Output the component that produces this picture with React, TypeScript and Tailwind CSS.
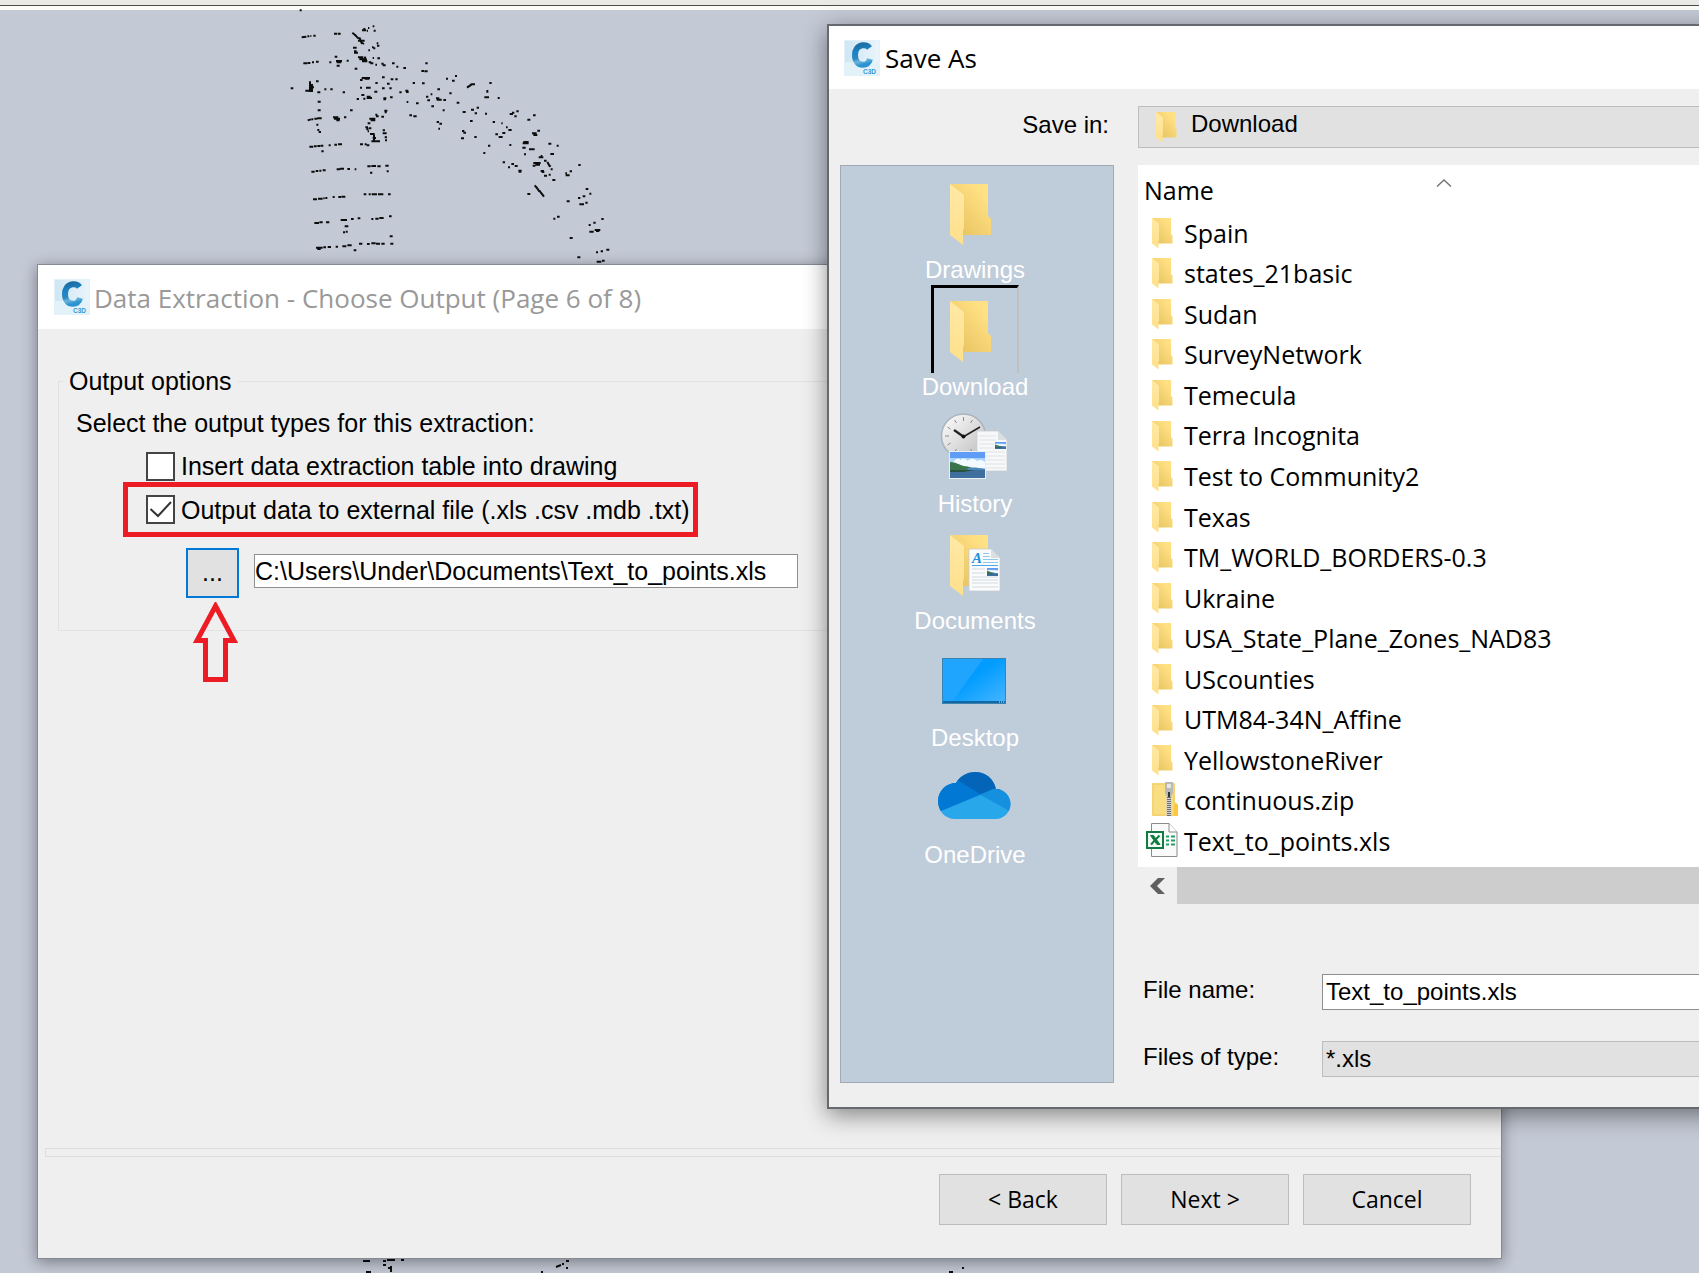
import { useState } from "react";
import type { ReactNode } from "react";

const folders: string[] = [
  "Spain",
  "states_21basic",
  "Sudan",
  "SurveyNetwork",
  "Temecula",
  "Terra Incognita",
  "Test to Community2",
  "Texas",
  "TM_WORLD_BORDERS-0.3",
  "Ukraine",
  "USA_State_Plane_Zones_NAD83",
  "UScounties",
  "UTM84-34N_Affine",
  "YellowstoneRiver",
];

// survey points of the drawing, in thirds of a pixel
const pointsPath =
  "M89 31h6 M95 112l14 -2 M112 109h6 M121 108h3 M130 107h7 M192 101h9 M203 101h9 " +
  "M247 98l12 10 M256 106l10 10 M268 112l8 20 M264 122h20 M272 126l10 6 M276 91h12 M280 87h6 M290 92h4 M294 84h4 M308 79h5 M311 92h6 " +
  "M249 143h11 M252 154h8 M252 158h12 M264 172h16 M268 178h22 M276 184h16 M284 170l6 14 M296 187h8 M301 190h9 M316 194h5 M308 174h4 M320 130h5 M321 137h7 M310 145h6 M306 142h5 M295 151h5 M322 175h8 M334 191h7 M338 196h9 " +
  "M100 190h12 M113 189h8 M126 187h6 M138 185h8 M178 187h6 M194 170h8 M198 183h18 M200 187h14 M200 197h9 M230 182h6 M254 206h8 " +
  "M62 265h8 M120 244v32 M126 252v24 M118 262h14 M106 272h22 M138 244h8 M142 277h9 M163 268h6 M181 268h7 M218 277h7 M143 305h9 M143 331h9 M240 331h8 " +
  "M113 361l10 -3 M124 358h6 M133 356h9 M142 355h13 M139 374h6 M142 390h6 M146 396h7 M189 352h16 M192 356h18 M199 361h10 M222 352h7 " +
  "M118 440h12 M132 439h8 M142 438h9 M152 437h8 M154 454h7 M176 436h6 M193 434h8 M204 433h12 M270 433h9 M284 433h6 M290 436h8 " +
  "M124 515h10 M137 513h8 M148 512h6 M158 511h9 M200 508h10 M210 506h12 M232 507h8 M254 508h5 M292 499h10 M304 498h14 M322 499h10 M346 497h10 M300 518h7 M350 514h6 " +
  "M129 598h12 M144 596h14 M160 595h4 M166 594h6 M188 591h6 M205 591h8 M214 590h12 M281 583h8 M296 583h6 M305 583h16 M324 583h16 M354 583h8 " +
  "M133 669h14 M148 667h10 M168 667h10 M212 660h19 M243 657h8 M263 655h8 M304 657h6 M316 656h10 M328 654h13 M357 649h8 M224 679h11 M219 697h6 M227 695h6 M359 709h9 " +
  "M138 743h20 M142 747h10 M160 742h8 M173 741h10 M197 740h7 M217 739h12 M232 736h13 M251 751h8 M267 731h10 M291 732h8 M304 730h13 M318 731h12 M334 731h10 M361 731h9 " +
  "M270 240h8 M275 234h25 M284 236h14 M336 232h8 M362 238h8 M376 238h7 M316 249h7 M351 251h8 M270 263h6 M288 263h14 M336 265h8 M358 265h7 M313 275h9 M274 285h9 M290 290h12 M290 294h16 M260 297h7 M280 296h6 M340 295h9 M340 298h8 M360 292h8 " +
  "M343 332h9 M344 337h6 M316 344h6 M318 349h8 M334 350h8 M298 356h18 M302 361h14 M293 370h8 M286 382h8 M289 388h6 M296 385h8 M293 394h4 M300 402h14 M312 404v22 M304 424h26 M338 391h7 M338 400h12 M344 412h7 M345 421h6 M308 414h10 " +
  "M366 190h8 M379 200h6 M400 204h8 M466 190h7 M454 213h8 M463 214h10 M428 249h7 M456 250h8 M388 277h7 M406 272h9 M408 276h8 M410 306h5 M438 310h8 M418 346h8 M430 349h10 " +
  "M502 268h8 M538 280h7 M468 290h7 M482 283h5 M472 301h8 M498 295h10 M500 299h15 M520 300h8 M484 319h8 M518 331h6 M560 308h8 M500 366h7 M508 371h8 M505 386h5 M528 236h6 M555 228h6 M546 242h8 M591 263l14 -10 M594 260l8 -4 M602 253h13 M658 249h7 M652 270v8 M643 292h14 M683 294h6 " +
  "M578 336h9 M603 329h9 M620 323h7 M614 340h7 M645 341h6 M600 363h8 M668 366h7 M694 370h4 M708 382h5 M715 390h10 M697 399h9 M676 403h8 M686 411h12 M576 393h7 M580 398h8 M573 415h9 M613 411h7 M654 437h7 M640 459h6 M718 435h6 " +
  "M719 342h10 M726 338h7 M739 334h7 M733 349h7 M772 359h9 M789 346h8 M802 392h8 M786 400h14 M790 405h12 M760 426h16 M758 430h18 M757 443h10 M777 448h7 M784 448h10 M762 463h6 M835 431h9 M860 437h6 M841 462h11 " +
  "M698 487h7 M724 492h8 M734 498h9 M714 502h6 M745 512h10 M746 515h8 M806 472h14 M812 468h5 M790 489h22 M796 494h14 M788 497h8 M822 482h8 M832 486l8 14 M836 494l6 6 M842 508h6 M812 513h10 M815 516h8 M822 527h9 M836 524h6 M847 540h9 " +
  "M794 556l10 12 M798 560l10 14 M808 572l14 18 M772 582h9 M886 520h5 M899 514h7 M887 526h12 M925 495h7 M947 567h8 M958 581h6 M924 594h7 M938 589h8 M928 613h14 M946 608h7 M890 604h9 M850 656h6 M861 650h8 M994 657h7 M970 668h7 M956 675h6 M958 695h13 M974 690h17 M978 693h10 M899 714h9 M978 757h6 M992 754h7 M1009 749h9 M922 772h9 M980 785h14 M996 782h8";

function DrawingPoints() {
  return (
    <>
      <svg
        className="absolute left-[270px] top-0 h-[265px] w-[360px]"
        viewBox="0 0 1080 795"
        fill="none"
        stroke="#0c0c0c"
        strokeWidth="6"
        aria-hidden="true"
      >
        <path d={pointsPath} />
      </svg>
      <svg
        className="absolute bottom-0 left-[320px] h-[17px] w-[660px]"
        viewBox="320 1256 660 17"
        fill="none"
        stroke="#0c0c0c"
        strokeWidth="2"
        aria-hidden="true"
      >
        <path d="M329 1258h6M363 1261h7M383 1261h3M387 1260h8M401 1260h3M383 1265h3M388 1268h4M391 1266v6M366 1272h5M556 1267l5 -2M562 1264h2M566 1261h3M566 1268h2M541 1272h2M949 1272h4M962 1268h2" />
      </svg>
    </>
  );
}

function AppIcon() {
  return (
    <svg className="h-9 w-9 shrink-0" viewBox="0 0 36 36" aria-hidden="true">
      <defs>
        <linearGradient id="c-ring" x1="0.300" y1="0" x2="0.500" y2="1">
          <stop offset="0" stopColor="#1d6fa5" />
          <stop offset="0.300" stopColor="#1c84c6" />
          <stop offset="0.600" stopColor="#2a86bd" />
          <stop offset="0.800" stopColor="#6cb5dc" />
          <stop offset="1" stopColor="#2b93d0" />
        </linearGradient>
        <linearGradient id="c-tile" x1="0" y1="0" x2="1" y2="0">
          <stop offset="0" stopColor="#cfe6f4" />
          <stop offset="1" stopColor="#eaf4fb" />
        </linearGradient>
      </defs>
      <rect width="36" height="36" fill="#e3f1f9" />
      <rect x="1" y="1" width="34" height="21" fill="url(#c-tile)" />
      <path
        d="M25.500 8C24 5.800 21.500 5 18.500 5.300C13.500 5.900 11 10 11 15C11 20.800 14 24.800 19 24.800C22.500 24.800 25 22.500 26 19"
        fill="none"
        stroke="url(#c-ring)"
        strokeWidth="6"
      />
      <text
        x="19"
        y="34"
        fontSize="6.500"
        fontWeight="700"
        fill="#2f9ad2"
        fontFamily="Liberation Sans, sans-serif"
      >
        C3D
      </text>
    </svg>
  );
}

function FolderShape() {
  return (
    <>
      <defs>
        <linearGradient id="folder-back" x1="0" y1="1" x2="1" y2="0">
          <stop offset="0.2" stopColor="#ebc765" />
          <stop offset="0.8" stopColor="#ffe083" />
        </linearGradient>
        <linearGradient id="folder-flap" x1="0" y1="0" x2="0" y2="1">
          <stop offset="0" stopColor="#ffe9a6" />
          <stop offset="1" stopColor="#fee08a" />
        </linearGradient>
      </defs>
      <path d="M19 16H57V48L60 51V67H30V30Z" fill="url(#folder-back)" />
      <path d="M19 16L33 27V60L32 62V77L19 67Z" fill="url(#folder-flap)" />
    </>
  );
}

function SmallFolder() {
  return (
    <svg className="h-[31px] w-[21px] shrink-0" viewBox="19 16 42 62" aria-hidden="true">
      <FolderShape />
    </svg>
  );
}

function ZipIcon() {
  return (
    <svg className="h-[38px] w-8" viewBox="0 0 32 38" aria-hidden="true">
      <path d="M6 1H29V20L32 23V34H6Z" fill="#f9dd83" />
      <path d="M7 2H28V33H7Z" fill="none" stroke="#f0cc62" />
      <path d="M28 34V23L30 21L32 23V34Z" fill="#fbc93b" />
      <path d="M19 0H27V11L25 15H21L19 11Z" fill="#b9b9b9" />
      <path d="M21 2H25V6H21Z" fill="#e6e6e6" />
      <path d="M22 10H24V15H22Z" fill="#333" />
      <path d="M23 15V34" stroke="#cfcfcf" strokeWidth="5" />
      <path d="M23 15V34" stroke="#6f6f6f" strokeWidth="4" strokeDasharray="1 1" />
    </svg>
  );
}

function ExcelIcon() {
  return (
    <svg className="h-[40px] w-8" viewBox="0 0 32 40" aria-hidden="true">
      <path d="M5.500 1.500H23L31 10V34.500H5.500Z" fill="#fafafa" stroke="#8b8b8b" />
      <path d="M23 1.500V10H31" fill="#fff" stroke="#8b8b8b" />
      <path
        d="M20 14.500H23M25 14.500H29M20 18.500H23M25 18.500H29M20 22.500H23M25 22.500H29"
        stroke="#21a366"
        strokeWidth="2"
      />
      <rect x="1" y="10" width="16" height="16" fill="#f4faf6" stroke="#107c41" strokeWidth="2" />
      <path d="M4.500 13.500H7.500L14 22.500H11Z" fill="#107c41" stroke="#107c41" />
      <path d="M13.500 13.500L5 22.500" stroke="#107c41" strokeWidth="2" />
    </svg>
  );
}

function Landscape({ x, y, width, height }: { x: number; y: number; width: number; height: number }) {
  return (
    <svg x={x} y={y} width={width} height={height} viewBox="0 0 36 26" preserveAspectRatio="none">
      <rect width="36" height="26" fill="#5f9cf5" />
      <rect y="6" width="36" height="12" fill="#a9d3f8" />
      <path d="M3 11C5 6 9 6 11 8C14 5 17 7 18 9C22 5 26 7 28 9C31 7 34 8 36 10V16H3Z" fill="#f2f9ff" />
      <path d="M0 10C6 10 10 13 14 14C20 14 24 17 29 18H0Z" fill="#39744c" />
      <path d="M18 16C24 15 30 16 36 17V19H18Z" fill="#4a86b8" />
      <rect y="18" width="36" height="8" fill="#3f6f9f" />
      <path d="M0 18H26L14 20H0Z" fill="#27523f" />
    </svg>
  );
}

function HistoryShape() {
  return (
    <>
      <defs>
        <linearGradient id="clock-face" x1="0" y1="0" x2="1" y2="1">
          <stop offset="0" stopColor="#fff" />
          <stop offset="1" stopColor="#bdbdbd" />
        </linearGradient>
      </defs>
      <circle cx="32.500" cy="34" r="22" fill="url(#clock-face)" stroke="#a9b4bd" strokeWidth="1.500" />
      <path
        d="M32.500 15v4M41.500 18l-2 3M23.500 18l2 3M16.500 25l3 2M14 34h4M16.500 43l3 -2M23.500 50l2 -3M41.500 50l-2 -3"
        stroke="#8b8b8b"
      />
      <path d="M23 28L33 35" stroke="#222" strokeWidth="2.200" />
      <path d="M32 35L49 25" stroke="#222" strokeWidth="1.500" />
      <circle cx="32.500" cy="34.500" r="2" fill="#111" />
      <path d="M46 29H67L76 38V69H46Z" fill="#f7f8f9" stroke="#c9cdd1" strokeWidth="0.800" />
      <path d="M67 29V38H76Z" fill="#dcdfe2" />
      <path
        d="M48 34H65M48 38H65M48 42H63M48 46H63M48 50H74M48 54H74M48 58H74M48 62H74M48 66H74"
        stroke="#dfe2e5"
      />
      <Landscape x={64} y={40} width={11} height={7} />
      <rect x="18" y="49" width="37" height="28" fill="#e9eef2" />
      <Landscape x={19} y={50} width={35} height={26} />
    </>
  );
}

function DocumentsShape() {
  return (
    <>
      <FolderShape />
      <path d="M38 30H60L69 39V72H38Z" fill="#fafbfc" stroke="#c9cdd1" strokeWidth="0.800" />
      <path d="M60 30V39H69Z" fill="#dcdfe2" />
      <text
        x="41"
        y="44"
        fontSize="15"
        fontStyle="italic"
        fontWeight="700"
        fill="#1e93dc"
        fontFamily="Liberation Serif, serif"
      >
        A
      </text>
      <path d="M52 34.500H58M52 37.500H59M52 40.500H67M52 43.500H67" stroke="#8dc8ee" />
      <path d="M41 46.500H67" stroke="#4ba8e2" />
      <path d="M41 50H54M41 54H54M41 58H67M41 61H67M41 64H67M41 68H67" stroke="#d5d9dd" />
      <Landscape x={56} y={49} width={11} height={8} />
    </>
  );
}

function DesktopShape() {
  return (
    <>
      <defs>
        <linearGradient id="desktop-glow" x1="0.2" y1="0.200" x2="1" y2="1">
          <stop offset="0.3" stopColor="#009cff" />
          <stop offset="1" stopColor="#45b5ff" />
        </linearGradient>
      </defs>
      <rect x="11" y="22" width="64" height="46" fill="#3b83b4" />
      <rect x="12" y="23" width="62" height="43" fill="url(#desktop-glow)" />
      <path d="M12 23H52L21 66H12Z" fill="#20a5ff" />
      <rect x="12" y="65" width="62" height="2" fill="#13689f" />
      <path d="M68 66H69M70 66H71M72 66H73" stroke="#cfe8f8" />
    </>
  );
}

function OneDriveShape() {
  return (
    <>
      <defs>
        <clipPath id="cloud">
          <path d="M24 66C14 66 7 58 7 48C7 38 15 30 25 30C29 23 36 19 44 19C55 19 63 26 65 36C73 36 79.500 43 79.500 51C79.500 59 73 66 65 66Z" />
        </clipPath>
      </defs>
      <g clipPath="url(#cloud)">
        <rect x="7" y="19" width="73" height="48" fill="#28a8ea" />
        <path d="M20 30V15H70V38L50 42Z" fill="#0364b8" />
        <path d="M5 60V28H28L50 41.500Z" fill="#0078d4" />
        <path d="M49 41.500L62 36L82 34V60Z" fill="#1490df" />
      </g>
    </>
  );
}

type Place = {
  name: string;
  icon: ReactNode;
};

const places: Place[] = [
  { name: "Drawings", icon: <FolderShape /> },
  { name: "Download", icon: <FolderShape /> },
  { name: "History", icon: <HistoryShape /> },
  { name: "Documents", icon: <DocumentsShape /> },
  { name: "Desktop", icon: <DesktopShape /> },
  { name: "OneDrive", icon: <OneDriveShape /> },
];

function CheckOption({
  label,
  checked,
  onChange,
}: {
  label: string;
  checked: boolean;
  onChange: (value: boolean) => void;
}) {
  return (
    <label className="flex items-center gap-[6px] leading-8 whitespace-nowrap">
      <span className="grid shrink-0">
        <input
          type="checkbox"
          checked={checked}
          onChange={(e) => onChange(e.target.checked)}
          className="col-start-1 row-start-1 h-[29px] w-[29px] appearance-none border-2 border-[#444] bg-white"
        />
        {checked && (
          <svg
            className="pointer-events-none col-start-1 row-start-1 h-[29px] w-[29px]"
            viewBox="0 0 29 29"
            fill="none"
            stroke="#333"
            strokeWidth="2"
            aria-hidden="true"
          >
            <path d="M4.500 14L12 21L25 7" />
          </svg>
        )}
      </span>
      {label}
    </label>
  );
}

function DataExtractionWindow() {
  const [insertTable, setInsertTable] = useState(false);
  const [externalFile, setExternalFile] = useState(true);

  return (
    <section className="absolute bottom-[14px] left-[37px] right-[197px] top-[264px] flex flex-col border border-[#858b93] bg-[#efefef] shadow-[0_3px_14px_rgba(0,0,0,0.4)]">
      <header className="flex h-16 items-center gap-1 bg-white pl-4">
        <AppIcon />
        <h1 className="pt-[2px] font-['Open_Sans',sans-serif] text-[26px] text-[#999]">
          Data Extraction - Choose Output (Page 6 of 8)
        </h1>
      </header>

      <fieldset className="ml-5 mt-9 border border-[#e2e2e2] pb-8 text-[25px]">
        <legend className="ml-1 px-[6px] leading-8">Output options</legend>
        <p className="ml-[17px] mt-[10px] leading-8">
          Select the output types for this extraction:
        </p>
        <div className="ml-[87px] mt-[11px]">
          <CheckOption
            label="Insert data extraction table into drawing"
            checked={insertTable}
            onChange={setInsertTable}
          />
        </div>
        <div className="ml-16 flex h-[55px] w-[575px] items-center border-[5px] border-[#ed1c24] pl-[18px]">
          <CheckOption
            label="Output data to external file (.xls .csv .mdb .txt)"
            checked={externalFile}
            onChange={setExternalFile}
          />
        </div>
        <div className="ml-[127px] mt-[11px] flex items-center gap-[15px]">
          <div className="relative">
            <button
              type="button"
              aria-label="Browse"
              className="h-[50px] w-[53px] border-2 border-[#0078d7] bg-[#e1e1e1]"
            >
              ...
            </button>
            <svg
              className="absolute left-[7px] top-[54px] h-20 w-[45px]"
              viewBox="0 0 45 80"
              fill="none"
              stroke="#ed1c24"
              strokeWidth="5"
              aria-hidden="true"
            >
              <path d="M22.500 4L41 38.500H32.500V77.500H12.500V38.500H4Z" />
            </svg>
          </div>
          <input
            type="text"
            aria-label="Output path"
            defaultValue="C:\Users\Under\Documents\Text_to_points.xls"
            className="mb-1 h-[34px] w-[544px] border border-[#8f8f8f] bg-white"
          />
        </div>
      </fieldset>

      <div className="ml-[7px] mt-auto h-[9px] border-y border-l border-[#dedede]"></div>
      <footer className="flex justify-end gap-[14px] pb-[33px] pr-[30px] pt-[17px] font-['Open_Sans',sans-serif] text-[23px]">
        {["< Back", "Next >", "Cancel"].map((name) => (
          <button
            key={name}
            type="button"
            className="h-[51px] w-[168px] border border-[#bdbdbd] bg-[#e1e1e1]"
          >
            {name}
          </button>
        ))}
      </footer>
    </section>
  );
}

function FileRow({ icon, name }: { icon: ReactNode; name: string }) {
  return (
    <li className="flex flex-1 items-center gap-[6px] pl-2">
      <span className="flex w-8 shrink-0 justify-center">{icon}</span>
      <span className="whitespace-nowrap">{name}</span>
    </li>
  );
}

function SaveAsDialog() {
  const [place, setPlace] = useState("Download");

  return (
    <section className="absolute -right-6 left-[827px] top-6 flex flex-col border-2 border-[#66696d] bg-[#efefef] shadow-[0_6px_22px_rgba(0,0,0,0.45)]">
      <header className="flex h-[63px] items-center gap-[5px] bg-white pl-[15px] font-['Open_Sans',sans-serif] text-[26px]">
        <AppIcon />
        <h2 className="pt-[2px]">Save As</h2>
      </header>

      <div className="flex items-center pl-[11px] pt-[17px]">
        <label htmlFor="save-in" className="w-[298px] shrink-0 pb-1 pr-[29px] text-right">
          Save in:
        </label>
        <div className="relative flex-1">
          <select
            id="save-in"
            className="h-[42px] w-full appearance-none border border-r-0 border-[#bdbdbd] bg-[#e1e1e1] pb-[6px] pl-[52px]"
          >
            <option>Download</option>
          </select>
          <span className="pointer-events-none absolute left-[18px] top-[6px]">
            <SmallFolder />
          </span>
        </div>
      </div>

      <div className="flex gap-6 pb-6 pl-[11px] pt-[17px]">
        <nav className="flex w-[274px] shrink-0 flex-col items-center border border-[#a3a9b5] bg-[#bfccda] pr-1 pt-[2px] text-white">
          {places.map((item) => (
            <button
              key={item.name}
              type="button"
              onClick={() => setPlace(item.name)}
              className="flex h-[117px] flex-col items-center"
            >
              <span className="grid">
                <svg
                  className="col-start-1 row-start-1 h-[88px] w-[88px]"
                  viewBox="0 0 88 88"
                  aria-hidden="true"
                >
                  {item.icon}
                </svg>
                {item.name === place && (
                  <span className="col-start-1 row-start-1 border-l-[3px] border-r-2 border-t-[3px] border-l-black border-r-[#c0c0c0] border-t-black"></span>
                )}
              </span>
              <span className="leading-7">{item.name}</span>
            </button>
          ))}
        </nav>

        <div className="flex min-w-0 flex-1 flex-col pb-[6px]">
          <div className="overflow-hidden bg-white pb-[5px] font-['Open_Sans',sans-serif] text-[25px]">
            <button
              type="button"
              className="grid h-12 w-[606px] grid-cols-[1fr_auto_1fr] items-center pl-[6px] text-left"
            >
              <span className="pt-1">Name</span>
              <svg
                className="mb-3 h-2 w-4"
                viewBox="0 0 16 8"
                fill="none"
                stroke="#777"
                strokeWidth="1.500"
                aria-hidden="true"
              >
                <path d="M1 7.500L8 1L15 7.500" />
              </svg>
            </button>
            <ul className="flex h-[649px] flex-col">
              {folders.map((name) => (
                <FileRow key={name} name={name} icon={<SmallFolder />} />
              ))}
              <FileRow name="continuous.zip" icon={<ZipIcon />} />
              <FileRow name="Text_to_points.xls" icon={<ExcelIcon />} />
            </ul>
          </div>
          <div className="flex h-[37px]">
            <button
              type="button"
              aria-label="Scroll left"
              className="flex w-[39px] items-center justify-center"
            >
              <svg className="h-4 w-[15px]" viewBox="0 0 15 16" aria-hidden="true">
                <path d="M8 0H15L7 8L15 16H8L0 8Z" fill="#606060" />
              </svg>
            </button>
            <div className="flex-1 bg-[#cdcdcd]"></div>
          </div>

          <div className="mt-[70px] flex h-9 items-center">
            <label htmlFor="file-name" className="w-[184px] shrink-0 pb-1 pl-[5px]">
              File name:
            </label>
            <input
              id="file-name"
              type="text"
              defaultValue="Text_to_points.xls"
              className="h-9 min-w-0 flex-1 border border-r-0 border-[#8f8f8f] bg-white px-[3px]"
            />
          </div>
          <div className="mt-[31px] flex h-9 items-center">
            <label htmlFor="file-type" className="w-[184px] shrink-0 pb-1 pl-[5px]">
              Files of type:
            </label>
            <select
              id="file-type"
              className="h-9 min-w-0 flex-1 appearance-none border border-r-0 border-[#bdbdbd] bg-[#e1e1e1] px-[3px]"
            >
              <option>*.xls</option>
            </select>
          </div>
        </div>
      </div>
    </section>
  );
}

export default function App() {
  return (
    <main className="relative h-screen overflow-hidden bg-[#c3c9d5] font-['Liberation_Sans',Arial,sans-serif] text-2xl text-black">
      <div className="h-[10px] border-b-4 border-[#fbfbf8] bg-[#e9eae6]">
        <div className="h-[6px] border-b border-[#4b4b50]"></div>
      </div>
      <DrawingPoints />
      <DataExtractionWindow />
      <SaveAsDialog />
    </main>
  );
}
